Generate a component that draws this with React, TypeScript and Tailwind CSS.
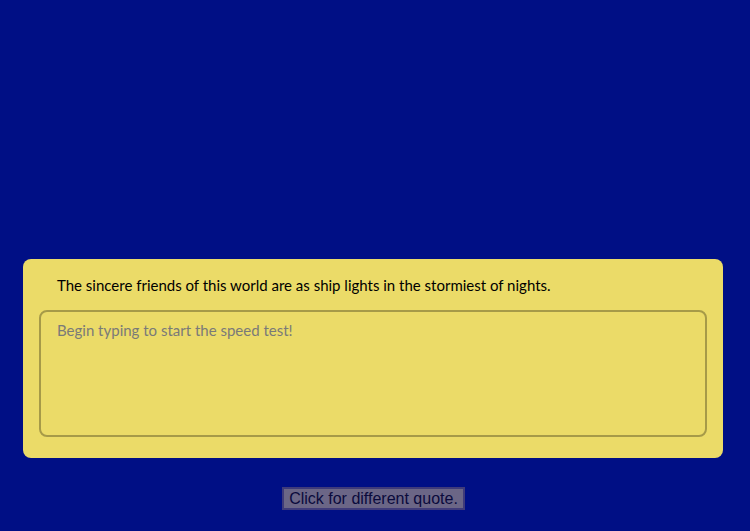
export default function App() {
  return (
    <div className="min-h-[531px] w-[750px] bg-[#000f85] flex flex-col">
      <div className="h-[259px]" />
      <div className="ml-[23px] w-[700px] h-[199px] rounded-[8px] bg-[#ebdb68] px-[16px] pt-[16px]">
        <p className="pl-[18px] text-[15px] leading-[20px] text-black font-['Lato',sans-serif]">
          The sincere friends of this world are as ship lights in the stormiest of nights.
        </p>
        <textarea
          className="mt-[15px] block w-[668px] h-[127px] rounded-[8px] border-2 border-[#a69a48] bg-transparent px-[16px] py-[8px] text-[15px] leading-[20px] font-['Lato',sans-serif] text-black placeholder:text-[#7a7a78] outline-none resize-none"
          placeholder="Begin typing to start the speed test!"
        />
      </div>
      <div className="flex justify-center mt-[29px]">
        <button className="ml-[-3px] h-[23px] px-[5px] bg-[#6b6686] border-2 border-[#3f3b7a] text-[#0a0a3c] text-[16px] leading-[18px] font-['Liberation_Sans',Arial,sans-serif]">
          Click for different quote.
        </button>
      </div>
    </div>
  );
}
